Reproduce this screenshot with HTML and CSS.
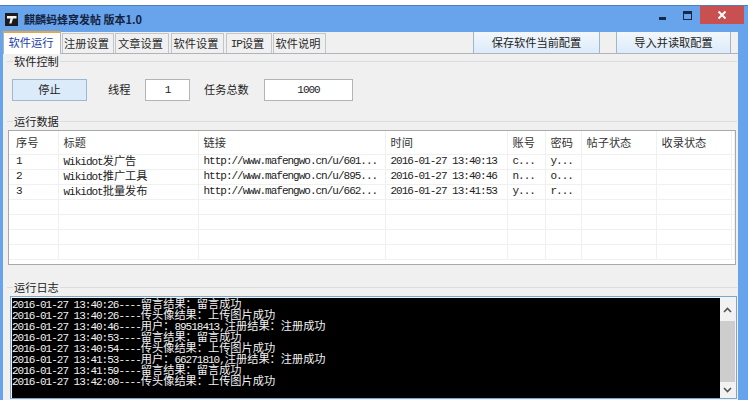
FILE: index.html
```html
<!DOCTYPE html>
<html lang="zh-CN">
<head>
<meta charset="utf-8">
<title>麒麟蚂蜂窝发帖</title>
<link rel="stylesheet" href="styles.css">
</head>
<body>
<div class="window">
  <header class="titlebar">
    <svg class="app-icon" width="13" height="13" viewBox="0 0 13 13"><rect width="13" height="13" fill="#1c1c1c"/><path d="M2 3h9.500v2.500H8L6.500 10.500H4.300L5.500 5.500H2z" fill="#f2f2f2"/></svg>
    <span class="app-title">麒麟蚂蜂窝发帖 版本1.0</span>
    <div class="controls">
      <span class="min"></span>
      <span class="max"></span>
      <span class="close"><svg width="10" height="10" viewBox="0 0 10 10"><path d="M1.500 1.500l7 7M8.500 1.500l-7 7" stroke="#fff" stroke-width="2"/></svg></span>
    </div>
  </header>
  <div class="content">
    <nav class="tabs">
      <span class="tab active">软件运行</span>
      <span class="tab t2">注册设置</span>
      <span class="tab t3">文章设置</span>
      <span class="tab t4">软件设置</span>
      <span class="tab t5"><span class="m">IP</span>设置</span>
      <span class="tab t6">软件说明</span>
      <button class="bar-btn save">保存软件当前配置</button>
      <button class="bar-btn load">导入并读取配置</button>
    </nav>
    <main class="panel">
      <div class="legend"><span>软件控制</span></div>
      <div class="control-row">
        <button class="stop">停止</button>
        <label class="lbl1">线程</label>
        <span class="field f1 m">1</span>
        <label class="lbl2">任务总数</label>
        <span class="field f2 m">1000</span>
      </div>
      <div class="legend data-legend"><span>运行数据</span></div>
      <div class="table-box">
        <table>
          <colgroup>
            <col class="c1"><col class="c2"><col class="c3"><col class="c4"><col class="c5"><col class="c6"><col class="c7"><col class="c8"><col>
          </colgroup>
          <thead>
            <tr><th>序号</th><th>标题</th><th>链接</th><th>时间</th><th>账号</th><th>密码</th><th>帖子状态</th><th>收录状态</th><th></th></tr>
          </thead>
          <tbody>
            <tr><td class="m">1</td><td><span class="m">Wikidot</span>发广告</td><td class="m">http://www.mafengwo.cn/u/601...</td><td class="m">2016-01-27 13:40:13</td><td class="m">c...</td><td class="m">y...</td><td></td><td></td><td></td></tr>
            <tr><td class="m">2</td><td><span class="m">Wikidot</span>推广工具</td><td class="m">http://www.mafengwo.cn/u/895...</td><td class="m">2016-01-27 13:40:46</td><td class="m">n...</td><td class="m">o...</td><td></td><td></td><td></td></tr>
            <tr><td class="m">3</td><td><span class="m">wikidot</span>批量发布</td><td class="m">http://www.mafengwo.cn/u/662...</td><td class="m">2016-01-27 13:41:53</td><td class="m">y...</td><td class="m">r...</td><td></td><td></td><td></td></tr>
            <tr><td></td><td></td><td></td><td></td><td></td><td></td><td></td><td></td><td></td></tr>
            <tr><td></td><td></td><td></td><td></td><td></td><td></td><td></td><td></td><td></td></tr>
            <tr><td></td><td></td><td></td><td></td><td></td><td></td><td></td><td></td><td></td></tr>
            <tr><td></td><td></td><td></td><td></td><td></td><td></td><td></td><td></td><td></td></tr>
          </tbody>
        </table>
      </div>
      <div class="legend log-legend"><span>运行日志</span></div>
      <div class="log-box">
        <div class="log">
          <div><span class="m">2016-01-27 13:40:26----</span>留言结果：留言成功</div>
          <div><span class="m">2016-01-27 13:40:26----</span>传头像结果：上传图片成功</div>
          <div><span class="m">2016-01-27 13:40:46----</span>用户：<span class="m">89518413,</span>注册结果：注册成功</div>
          <div><span class="m">2016-01-27 13:40:53----</span>留言结果：留言成功</div>
          <div><span class="m">2016-01-27 13:40:54----</span>传头像结果：上传图片成功</div>
          <div><span class="m">2016-01-27 13:41:53----</span>用户：<span class="m">66271810,</span>注册结果：注册成功</div>
          <div><span class="m">2016-01-27 13:41:59----</span>留言结果：留言成功</div>
          <div><span class="m">2016-01-27 13:42:00----</span>传头像结果：上传图片成功</div>
        </div>
        <div class="scrollbar">
          <span class="arrow"><svg width="9" height="6" viewBox="0 0 9 6"><path d="M1 5l3.500-3.500L8 5" fill="none" stroke="#555" stroke-width="1.600"/></svg></span>
          <span class="thumb"></span>
          <span class="arrow"><svg width="9" height="6" viewBox="0 0 9 6"><path d="M1 1l3.500 3.500L8 1" fill="none" stroke="#555" stroke-width="1.600"/></svg></span>
        </div>
      </div>
    </main>
  </div>
</div>
</body>
</html>
```
FILE: styles.css
```css
* { box-sizing: border-box; }
html, body { margin: 0; height: 100%; overflow: hidden; }
body {
  background: #fff;
  padding-top: 5px;
  font: 11.2px/1 "Noto Sans CJK SC", sans-serif;
  color: #222;
}
.m {
  font-family: "Liberation Mono", "Noto Sans CJK SC", monospace;
  font-size: 11px;
  letter-spacing: -1px;
}
.window {
  height: 395px;
  background: #68a4ec;
  border-top: 1px solid #4f7fb8;
  padding-left: 3px;
  display: flex;
  flex-direction: column;
}
.titlebar {
  height: 26px;
  flex: none;
  display: flex;
  align-items: flex-start;
  padding-right: 4px;
}
.app-icon { margin: 7px 6px 0 2px; }
.app-title {
  margin-top: 7px;
  font-weight: 700;
  font-size: 11px;
  line-height: 13px;
  color: #14233f;
}
.controls { margin-left: auto; display: flex; align-items: flex-start; }
.min { width: 7px; height: 3px; background: #15294a; margin: 11px 17px 0 0; }
.max { width: 9px; height: 9px; border: 1px solid #15294a; border-top-width: 3px; margin: 5px 8px 0 0; }
.close {
  width: 44px;
  height: 18px;
  background: #c85050;
  display: flex;
  align-items: center;
  justify-content: center;
}
.content {
  width: 735px;
  flex: 1;
  min-height: 0;
  display: flex;
  flex-direction: column;
  background: #f0f0f0;
}
.tabs {
  height: 22px;
  flex: none;
  display: flex;
  align-items: flex-end;
  border-bottom: 1px solid #aeb4ba;
  position: relative;
}
.tab {
  height: 20px;
  background: #f0f0f0;
  border: 1px solid #c2c6ca;
  border-bottom: 0;
  display: flex;
  align-items: center;
  justify-content: center;
  padding: 1px 3px 0 0;
  color: #2a2a2a;
}
.tab.active {
  width: 58px;
  height: 23px;
  margin: 0 0 -1px;
  background: #fff;
  border-top: 2px solid #e3a64c;
  border-left-color: #aeb4ba;
  border-right-color: #aeb4ba;
  color: #2340a8;
  position: relative;
  padding: 0 2px 1px 0;
}
.t2 { width: 52px; margin-left: 1px; }
.t3 { width: 54px; margin-left: 1px; }
.t4 { width: 53px; margin-left: 2px; }
.t5 { width: 46px; margin-left: 2px; }
.t6 { width: 53px; margin-left: 1px; }
.bar-btn {
  height: 21px;
  padding: 0;
  background: linear-gradient(#f2f7fc, #dcebf9);
  border: 1px solid #9fb6cb;
  border-top: 0;
  border-bottom: 0;
  font: inherit;
  color: #222;
}
.save { width: 127px; margin-left: auto; margin-right: 16px; }
.load { width: 115px; margin-right: 7px; }
.panel {
  flex: 1;
  min-height: 0;
  padding: 0 1px 0 4px;
  display: flex;
  flex-direction: column;
}
.legend {
  height: 14px;
  flex: none;
  display: flex;
  align-items: center;
  line-height: 14px;
  color: #222;
}
.legend::before { content: ""; width: 6px; height: 1px; background: #dcdcdc; }
.legend::after { content: ""; flex: 1; height: 1px; background: #dcdcdc; }
.legend span { padding: 0 1px; }
.control-row {
  height: 22px;
  margin: 11px 0 0 5px;
  flex: none;
  display: flex;
  align-items: center;
}
.stop {
  width: 75px;
  height: 22px;
  padding: 0;
  background: #dcebf9;
  border: 1px solid #9db8d0;
  font: inherit;
  color: #222;
}
.lbl1 { margin-left: 21px; width: 37px; }
.lbl2 { margin-left: 14px; width: 60px; }
.field {
  height: 22px;
  background: #fff;
  border: 1px solid #b4b4b4;
  display: flex;
  align-items: center;
  justify-content: center;
}
.f1 { width: 45px; }
.f2 { width: 89px; }
.data-legend { margin-top: 13px; }
.table-box {
  height: 135px;
  margin: 2px 1px 0 1px;
  flex: none;
  background: #fff;
  border: 1px solid #a9a9a9;
  overflow: hidden;
}
table {
  width: 100%;
  table-layout: fixed;
  border-collapse: collapse;
}
.c1 { width: 49px; }
.c2 { width: 140px; }
.c3 { width: 187px; }
.c4 { width: 122px; }
.c5 { width: 38px; }
.c6 { width: 36px; }
.c7 { width: 75px; }
.c8 { width: 75px; }
th, td {
  padding: 0 0 0 5px;
  white-space: nowrap;
  text-align: left;
  font-weight: 400;
  border-right: 1px solid #f0f0f0;
}
th:first-child, td:first-child { padding-left: 7px; }
th { height: 23px; color: #333; border-bottom: 1px solid #f0f0f0; }
td { height: 15px; line-height: 11px; border-bottom: 1px solid #f0f0f0; color: #222; }
.log-legend { margin-top: 15px; }
.log-box {
  flex: 1;
  min-height: 0;
  margin: 2px 0 1px 3px;
  display: flex;
  border: 1px solid #7ea6c8;
  padding: 1px 1px 0 1px;
  background: #eef3f8;
}
.log {
  flex: 1;
  background: #000;
  color: #f2f2f2;
  line-height: 11px;
  white-space: nowrap;
}
.log div { height: 11px; }
.scrollbar {
  width: 15px;
  flex: none;
  display: flex;
  flex-direction: column;
  background: #f2f2f2;
}
.arrow { height: 23px; flex: none; display: flex; align-items: center; justify-content: center; }
.arrow:last-child { height: 16px; }
.thumb { flex: 1; background: #cdcdcd; }
```
